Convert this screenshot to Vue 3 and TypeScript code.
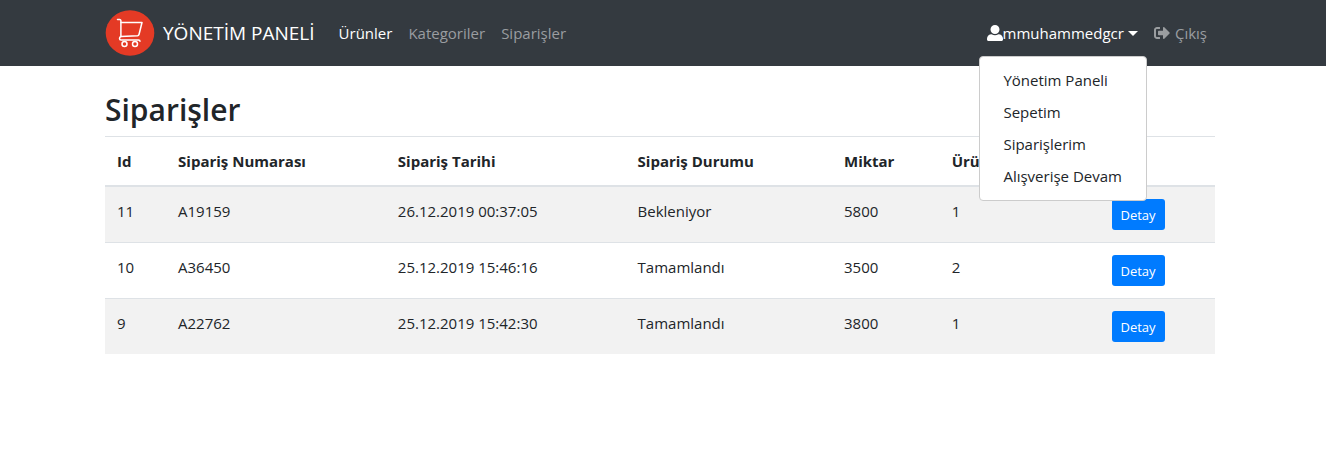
<script setup lang="ts">
import { ref } from 'vue'

interface Order {
  id: number
  number: string
  date: string
  status: string
  amount: number
  count: number
}

const navLinks = ['Ürünler', 'Kategoriler', 'Siparişler']
const activeLink = ref('Ürünler')
const menuOpen = ref(true)
const menuItems = ['Yönetim Paneli', 'Sepetim', 'Siparişlerim', 'Alışverişe Devam']
const columns = ['Id', 'Sipariş Numarası', 'Sipariş Tarihi', 'Sipariş Durumu', 'Miktar', 'Ürün', '']

const orders: Order[] = [
  { id: 11, number: 'A19159', date: '26.12.2019 00:37:05', status: 'Bekleniyor', amount: 5800, count: 1 },
  { id: 10, number: 'A36450', date: '25.12.2019 15:46:16', status: 'Tamamlandı', amount: 3500, count: 2 },
  { id: 9, number: 'A22762', date: '25.12.2019 15:42:30', status: 'Tamamlandı', amount: 3800, count: 1 },
]
</script>

<template>
  <div class="page">
    <header class="navbar">
      <nav class="container bar">
        <a class="brand" href="#">
          <svg class="logo" viewBox="0 0 50 50" aria-hidden="true">
            <ellipse cx="25" cy="25" rx="24.3" ry="22.8" fill="#e43a25" />
            <g fill="none" stroke="#fff" stroke-width="1.5" stroke-linecap="round" stroke-linejoin="round">
              <path d="M12.500 11.500h2.200q1 0 1.200 1.200V28" />
              <path d="M16 14.500H37L34 26.500q-.3 1.200-1.500 1.300L16 28.500" />
              <path d="M16 28.500q-1.500 .5-1.500 2t1.500 1.500H33.500q1.500 0 1.500 1.200" />
              <circle cx="19.500" cy="36" r="2.500" />
              <circle cx="30" cy="36" r="2.500" />
            </g>
          </svg>
          <span>YÖNETİM PANELİ</span>
        </a>
        <ul class="links">
          <li v-for="link in navLinks" :key="link">
            <a href="#" class="nav-link" :class="{ active: link === activeLink }" @click.prevent="activeLink = link">{{ link }}</a>
          </li>
        </ul>
        <ul class="links account">
          <li class="dropdown">
            <button type="button" class="nav-link active toggle" :aria-expanded="menuOpen" @click="menuOpen = !menuOpen">
              <svg class="icon" viewBox="0 0 512 512" aria-hidden="true">
                <path fill="currentColor" d="M256 0a144 144 0 1 0 0 288a144 144 0 1 0 0-288zM367 297c-34 19-71 28-111 28s-77-9-111-28C64 297 0 360 0 441v23c0 27 21 48 48 48h416c27 0 48-21 48-48v-23c0-81-64-144-145-144z" />
              </svg>
              <span>mmuhammedgcr</span>
              <span class="caret"></span>
            </button>
            <div v-if="menuOpen" class="menu">
              <a v-for="item in menuItems" :key="item" href="#">{{ item }}</a>
            </div>
          </li>
          <li>
            <a href="#" class="nav-link exit">
              <svg class="icon" viewBox="0 0 512 512" aria-hidden="true">
                <path fill="currentColor" d="M497 273L329 441c-15 15-41 4.500-41-17v-96H152c-13.300 0-24-10.700-24-24v-96c0-13.300 10.700-24 24-24h136V88c0-21.400 25.900-32 41-17l168 168c9.300 9.400 9.300 24.600 0 34zM192 436v-40c0-6.600-5.400-12-12-12H96c-17.700 0-32-14.300-32-32V160c0-17.700 14.300-32 32-32h84c6.600 0 12-5.400 12-12V76c0-6.600-5.400-12-12-12H96c-53 0-96 43-96 96v192c0 53 43 96 96 96h84c6.600 0 12-5.400 12-12z" />
              </svg>
              <span>Çıkış</span>
            </a>
          </li>
        </ul>
      </nav>
    </header>

    <main class="container">
      <h1>Siparişler</h1>
      <table>
        <colgroup>
          <col class="c-id" />
          <col class="c-number" />
          <col class="c-date" />
          <col class="c-status" />
          <col class="c-amount" />
          <col class="c-count" />
          <col />
        </colgroup>
        <thead>
          <tr>
            <th v-for="column in columns" :key="column" scope="col">{{ column }}</th>
          </tr>
        </thead>
        <tbody>
          <tr v-for="order in orders" :key="order.id">
            <td>{{ order.id }}</td>
            <td>{{ order.number }}</td>
            <td>{{ order.date }}</td>
            <td>{{ order.status }}</td>
            <td>{{ order.amount }}</td>
            <td>{{ order.count }}</td>
            <td><a href="#" class="btn">Detay</a></td>
          </tr>
        </tbody>
      </table>
    </main>
  </div>
</template>

<style>
body {
  margin: 0;
  background: #fff;
}
</style>

<style scoped>
.page {
  --gutter: 6px;
  color: #212529;
  font-family: "Segoe UI", "Open Sans", "Noto Sans", sans-serif;
  font-size: 15px;
  line-height: 24px;
}
.page *,
.page *::before {
  box-sizing: border-box;
}
a {
  color: inherit;
  text-decoration: none;
}
.navbar {
  background: #343a40;
  padding: 8px var(--gutter) 8px 0;
}
.container {
  max-width: 1110px;
  margin: 0 auto;
}
.page > main {
  width: calc(100% - var(--gutter));
  margin-left: max(0px, calc((100% - 1110px - var(--gutter)) / 2));
}
.bar {
  display: flex;
  align-items: center;
}
.brand {
  display: flex;
  align-items: center;
  gap: 8px;
  margin-right: 16px;
  color: #fff;
  font-size: 19px;
  white-space: nowrap;
}
.logo {
  width: 50px;
  height: 50px;
}
.links {
  display: flex;
  margin: 0;
  padding: 0;
  list-style: none;
}
.account {
  margin-left: auto;
}
.nav-link {
  display: flex;
  align-items: center;
  padding: 8px;
  border: 0;
  background: none;
  color: #9a9da0;
  font: inherit;
  white-space: nowrap;
}
.nav-link.active {
  color: #fff;
}
.icon {
  width: 16px;
  height: 16px;
}
.exit {
  gap: 5px;
}
.caret {
  margin-left: 4px;
  border-top: 5px solid;
  border-left: 5px solid transparent;
  border-right: 5px solid transparent;
}
.dropdown {
  position: relative;
}
.menu {
  position: absolute;
  z-index: 10;
  top: calc(100% + 3px);
  right: -1px;
  min-width: 160px;
  padding: 7px 0 8px;
  border: 1px solid #ccc;
  border-radius: 4px;
  background: #fff;
}
.menu a {
  display: block;
  padding: 4px 24px 4px 23px;
  white-space: nowrap;
}
h1 {
  margin: 0;
  padding: 25px 0 7px;
  font-size: 30px;
  font-weight: 600;
  line-height: 38px;
}
table {
  width: 100%;
  table-layout: fixed;
  border-collapse: separate;
  border-spacing: 0;
}
.c-id { width: 5.5%; }
.c-number { width: 19.8%; }
.c-date { width: 21.6%; }
.c-status { width: 18.6%; }
.c-amount { width: 9.7%; }
.c-count { width: 14.4%; }
th,
td {
  padding: 12px;
  border-top: 1px solid #dee2e6;
  text-align: left;
  vertical-align: top;
}
th {
  border-bottom: 2px solid #dee2e6;
  font-weight: 700;
  white-space: nowrap;
}
tbody tr:first-child td {
  border-top: 0;
}
tbody tr:nth-child(odd) {
  background: #f2f2f2;
}
.btn {
  display: inline-block;
  padding: 6px 9px 4px;
  border-radius: 3px;
  background: #007bff;
  color: #fff;
  font-size: 13px;
  line-height: 21px;
  vertical-align: top;
}
</style>
